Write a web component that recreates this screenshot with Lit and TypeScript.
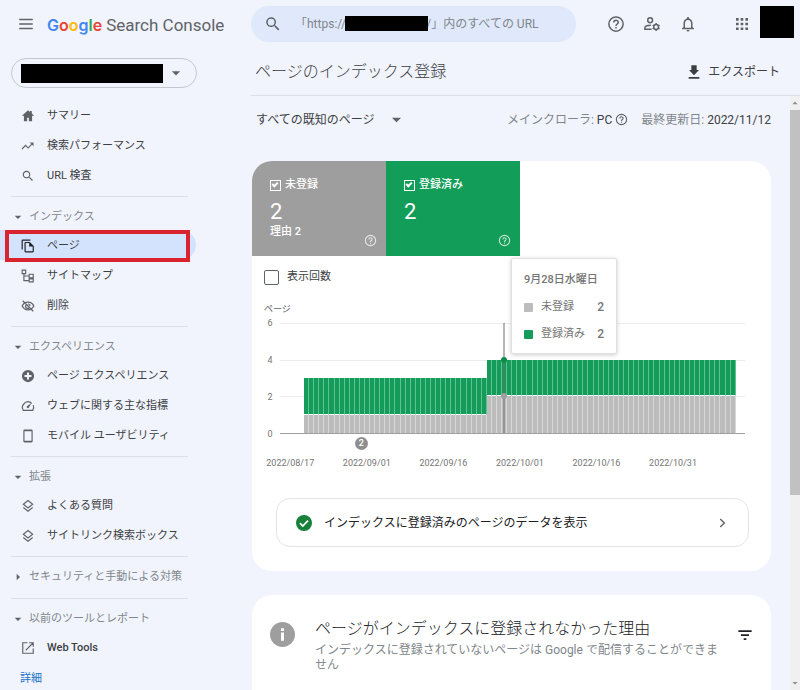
import { LitElement, html, css, svg, nothing } from "lit";
import { customElement, property } from "lit/decorators.js";

const icons: Record<string, unknown> = {
  menu: svg`<path d="M3 5h18v2H3zM3 11h18v2H3zM3 17h18v2H3z"/>`,
  home: svg`<path d="M12 2 1.500 11.500H5V21h5.500v-6h3v6H19v-9.500h3.500L18.500 7.900V3.500h-3v1.700z"/>`,
  trend: svg`<path d="m15 6 2.600 2.600-5.400 5.400-4.400-4.400L1 16.400l1.400 1.400 5.400-5.400 4.400 4.400 6.800-6.800L21.500 12.500V6z"/>`,
  search: svg`<path d="M15.500 14h-.8l-.3-.3A6.500 6.500 0 1 0 13.700 14.400l.3.300v.8l5 5 1.500-1.500zm-6 0a4.500 4.500 0 1 1 0-9 4.500 4.500 0 0 1 0 9z"/>`,
  pages: svg`<path d="M16 1H3a2 2 0 0 0-2 2v15h2V3h13z"/><path fill-rule="evenodd" d="M15 5H8a2 2 0 0 0-2 2v14c0 1.100.9 2 2 2h12a2 2 0 0 0 2-2V12zM8 21V7h6v6h6v8z"/>`,
  sitemap: svg`<path fill="none" stroke="currentColor" stroke-width="2" d="M2 2h6v6H2zM5 8v12h9M5 12h9M14 9h7v6h-7zM14 17h7v5h-7z"/>`,
  hidden: svg`<path fill="none" stroke="currentColor" stroke-width="2.200" d="M2 12c2-4 5.500-6.500 10-6.500S20 8 22 12c-2 4-5.500 6.500-10 6.500S4 16 2 12zM3 3l18 18"/><path fill="none" stroke="currentColor" stroke-width="2" d="M9 10a3.500 3.500 0 0 0 5 5M12 8.500a3.500 3.500 0 0 1 3.500 3.500"/>`,
  plus: svg`<path fill-rule="evenodd" d="M12 1.500a10.500 10.500 0 1 0 0 21 10.500 10.500 0 0 0 0-21zM10.300 6h3.400v4.300H18v3.400h-4.300V18h-3.400v-4.300H6v-3.400h4.300z"/>`,
  speed: svg`<path fill="none" stroke="currentColor" stroke-width="2" d="M18.500 7.500A9.500 9.500 0 0 0 4 19.500h16a9.500 9.500 0 0 0 .8-9"/><path d="m18 7-4.500 7.500a2 2 0 1 1-3-2.500z"/>`,
  phone: svg`<path fill-rule="evenodd" d="M6 1h12a2 2 0 0 1 2 2v18a2 2 0 0 1-2 2H6a2 2 0 0 1-2-2V3c0-1.100.9-2 2-2zm0 3v16h12V4z"/>`,
  layers: svg`<path fill="none" stroke="currentColor" stroke-width="2" d="m12 2.500 8 6.500-8 6.500L4 9zM4 14.500l8 6.500 8-6.500"/>`,
  open: svg`<path fill="none" stroke="currentColor" stroke-width="2" d="M11 3H3v18h18v-8M14 3h7v7M21 3 8 16"/>`,
  help: svg`<circle cx="12" cy="12" r="9.500" fill="none" stroke="currentColor" stroke-width="2"/><path fill="none" stroke="currentColor" stroke-width="2" d="M9 10c0-4 6-4 6-.3 0 2.300-3 2.400-3 5"/><path d="M11 16h2v2h-2z"/>`,
  users: svg`<path fill="none" stroke="currentColor" stroke-width="2" d="M11.500 19H2.500v-2c0-2.300 3.500-3.500 8-3.500"/><circle cx="9.500" cy="7" r="3.200" fill="none" stroke="currentColor" stroke-width="2"/><circle cx="17.500" cy="16" r="3.200" fill="none" stroke="currentColor" stroke-width="2"/><path fill="none" stroke="currentColor" stroke-width="2" d="M17.500 10.700v2M17.500 19.300v2M12.900 13.400l1.800 1M20.300 17.600l1.800 1M12.900 18.600l1.800-1M20.300 14.400l1.800-1"/>`,
  bell: svg`<path fill-rule="evenodd" d="M12 22a2 2 0 0 0 2-2h-4c0 1.100.9 2 2 2zm6-6v-5c0-3.100-1.600-5.600-4.500-6.300V4a1.500 1.500 0 0 0-3 0v.7C7.600 5.400 6 7.900 6 11v5l-2 2v1h16v-1zm-2 1H8v-6c0-2.500 1.500-4.500 4-4.500s4 2 4 4.500z"/>`,
  apps: svg`<path d="M4 4h3.500v3.500H4zM10.200 4h3.500v3.500h-3.500zM16.500 4H20v3.500h-3.500zM4 10.200h3.500v3.500H4zM10.200 10.200h3.500v3.500h-3.500zM16.500 10.200H20v3.500h-3.500zM4 16.500h3.500V20H4zM10.200 16.500h3.500V20h-3.500zM16.500 16.500H20V20h-3.500z"/>`,
  download: svg`<path d="M19.500 9H16V2H8v7H4.500l7.500 8zM4 19.500h16V22H4z"/>`,
  check: svg`<circle cx="12" cy="12" r="12"/><path fill="none" stroke="#fff" stroke-width="2.600" d="m6 12.300 4.200 4.200L18 8.500"/>`,
  chevron: svg`<path fill="none" stroke="currentColor" stroke-width="2.400" d="m9 5 7 7-7 7"/>`,
  info: svg`<circle cx="12" cy="12" r="12"/><path fill="#fff" d="M10.600 10h2.800v8h-2.800zM10.600 6h2.800v2.600h-2.800z"/>`,
  filter: svg`<path d="M2 5h20v2.400H2zM6 11h12v2.400H6zM10 17h4v2.400h-4z"/>`,
  down: svg`<path d="M2 8h20L12 18z"/>`,
  right: svg`<path d="M8 2v20l10-10z"/>`,
  up: svg`<path d="M2 17h20L12 6z"/>`,
};

@customElement("gsc-icon")
export class GscIcon extends LitElement {
  @property() name = "";
  static styles = css`
    :host { display: inline-block; flex: none; width: 14px; height: 14px; }
    .glyph { display: block; width: 100%; height: 100%; fill: currentColor; }
  `;
  render() {
    return html`<svg class="glyph" viewBox="0 0 24 24" aria-hidden="true">${icons[this.name]}</svg>`;
  }
}

interface Item { icon: string; text: string; current?: boolean; }
interface Group { title?: string; open?: boolean; items: Item[]; }

const groups: Group[] = [
  { items: [
    { icon: "home", text: "サマリー" },
    { icon: "trend", text: "検索パフォーマンス" },
    { icon: "search", text: "URL 検査" },
  ] },
  { title: "インデックス", open: true, items: [
    { icon: "pages", text: "ページ", current: true },
    { icon: "sitemap", text: "サイトマップ" },
    { icon: "hidden", text: "削除" },
  ] },
  { title: "エクスペリエンス", open: true, items: [
    { icon: "plus", text: "ページ エクスペリエンス" },
    { icon: "speed", text: "ウェブに関する主な指標" },
    { icon: "phone", text: "モバイル ユーザビリティ" },
  ] },
  { title: "拡張", open: true, items: [
    { icon: "layers", text: "よくある質問" },
    { icon: "layers", text: "サイトリンク検索ボックス" },
  ] },
  { title: "セキュリティと手動による対策", open: false, items: [] },
  { title: "以前のツールとレポート", open: true, items: [{ icon: "open", text: "Web Tools" }] },
];

@customElement("gsc-sidebar")
export class GscSidebar extends LitElement {
  static styles = css`
    :host { display: block; color: #3c4043; font-size: 11px; line-height: 16px; }
    .property {
      display: flex; align-items: center; gap: 8px; box-sizing: border-box;
      width: 186px; height: 30px; margin: 10px 0 12px 11px; padding: 0 15px 0 9px;
      border: 1px solid #c4c7d0; border-radius: 15px; background: none; color: #5f6368;
    }
    .mask { flex: 1; height: 19px; background: #000; }
    .property gsc-icon { width: 10px; height: 10px; }
    .list { margin: 0; padding: 0; list-style: none; }
    .row { position: relative; }
    .item {
      display: flex; align-items: center; gap: 12px; height: 30px; width: 196px;
      box-sizing: border-box; padding: 2px 0 0 21px; color: inherit; text-decoration: none; white-space: nowrap;
    }
    .item gsc-icon { color: #5f6368; }
    .item.current { background: #d3e3fd; border-radius: 0 15px 15px 0; }
    .item.current gsc-icon { color: #202124; }
    .frame { position: absolute; inset: 0 auto -2px 5px; width: 185px; box-sizing: border-box; border: 4px solid #d9232e; pointer-events: none; }
    .group { margin-top: 6px; }
    .group.closed { padding-bottom: 2px; }
    .rule { height: 1px; margin: 0 63px 4px 11px; background: #dcdfe6; }
    .toggle {
      display: flex; align-items: center; gap: 7px; height: 29px; padding: 2px 0 0 14px;
      border: 0; background: none; color: #80868b; font: inherit; white-space: nowrap;
    }
    .toggle gsc-icon { width: 8px; height: 8px; color: #5f6368; }
    .latin { font-weight: 500; }
    .more { display: inline-block; padding: 9px 20px; color: #1a73c8; text-decoration: none; }
  `;
  private item(i: Item) {
    return html`<li class="row">
      <a class="item ${i.current ? "current" : ""}" href="#" aria-current=${i.current ? "page" : nothing}>
        <gsc-icon name=${i.icon}></gsc-icon><span class=${i.icon === "open" ? "latin" : ""}>${i.text}</span></a>
      ${i.current ? html`<div class="frame"></div>` : nothing}
    </li>`;
  }
  render() {
    return html`
      <button class="property" aria-label="プロパティを選択"><span class="mask"></span><gsc-icon name="down"></gsc-icon></button>
      <nav>
        ${groups.map((g) => {
          const list = html`<ul class="list">${g.items.map((i) => this.item(i))}</ul>`;
          return g.title
            ? html`<section class="group ${g.open ? "" : "closed"}">
                <div class="rule"></div>
                <button class="toggle" aria-expanded=${g.open ? "true" : "false"}>
                  <gsc-icon name=${g.open ? "down" : "right"}></gsc-icon>${g.title}</button>
                ${list}
              </section>`
            : list;
        })}
        <a class="more" href="#">詳細</a>
      </nav>`;
  }
}

interface Day { off: number; on: number; }
const days: Day[] = Array.from({ length: 85 }, (_, i) => ({ off: i < 36 ? 1 : 2, on: 2 }));
const hovered = 39;
const noted = 11;
const maxValue = 6;
const dates = ["2022/08/17", "2022/09/01", "2022/09/16", "2022/10/01", "2022/10/16", "2022/10/31"];
const share = (v: number) => `height:${(v / maxValue) * 100}%`;

@customElement("gsc-chart")
export class GscChart extends LitElement {
  static styles = css`
    :host { display: block; color: #757575; font-size: 9px; line-height: 12px; }
    .name { margin: 0 0 8px 12px; color: #5f6368; }
    .body { display: flex; height: 111px; padding: 0 26px 0 12px; }
    .scale { display: flex; flex-direction: column; justify-content: space-between; width: 16px; margin: -6px 0; text-align: center; box-sizing: border-box; padding-right: 4px; }
    .plot { flex: 1; position: relative; display: flex; padding: 0 2% 0 5%; border-bottom: 1px solid #9e9e9e; }
    .grid { position: absolute; inset: 0; display: flex; flex-direction: column; }
    .line { flex: 1; border-top: 1px solid #ececec; }
    .day { flex: 1; position: relative; display: flex; flex-direction: column; justify-content: flex-end; }
    .on, .off { box-sizing: border-box; }
    .on { background: #159b5a; border-right: 1px solid #5cc391; border-bottom: 1px solid #fff; }
    .off { background: #bcbcbc; border-right: 1px solid #d8d8d8; }
    .cursor { position: absolute; top: 0; bottom: 0; left: 1px; width: 2px; background: rgba(110, 110, 110, 0.5); z-index: 1; }
    .dot { position: absolute; left: -1px; width: 6px; height: 6px; margin-bottom: -3px; border-radius: 50%; background: #0f8a4c; z-index: 1; }
    .dot.low { background: #9e9e9e; }
    .note {
      position: absolute; top: calc(100% + 4px); left: -5px; width: 13px; height: 13px; border-radius: 50%;
      background: #8f8f8f; color: #fff; font-weight: 500; line-height: 13px; text-align: center;
    }
    .tip {
      position: absolute; top: -65px; left: 9px; z-index: 2; box-sizing: border-box; width: 106px; padding: 13px 12px 11px;
      border: 1px solid #e0e0e0; border-radius: 2px; background: #fff; box-shadow: 0 1px 4px rgba(0, 0, 0, 0.2);
      font-size: 11px; line-height: 16px; color: #757575; white-space: nowrap;
    }
    .tip-title { margin-bottom: 10px; font-weight: 500; }
    .entry { display: flex; align-items: center; margin-top: 11px; }
    .swatch { width: 9px; height: 9px; margin-right: 8px; border-radius: 1px; background: #bcbcbc; }
    .swatch.green { background: #159b5a; }
    .value { margin-left: auto; font-size: 12px; font-weight: 500; }
    .dates { display: grid; grid-template-columns: repeat(6, 1fr); width: 88.5%; margin-top: 23px; text-align: center; }
  `;
  render() {
    return html`
      <div class="name">ページ</div>
      <div class="body">
        <div class="scale"><span>6</span><span>4</span><span>2</span><span>0</span></div>
        <div class="plot">
          <div class="grid"><div class="line"></div><div class="line"></div><div class="line"></div></div>
          ${days.map((d, i) => html`<div class="day">
            <div class="on" style=${share(d.on)}></div>
            <div class="off" style=${share(d.off)}></div>
            ${i === hovered ? html`
              <div class="cursor"></div>
              <div class="dot" style="bottom:${((d.on + d.off) / maxValue) * 100}%"></div>
              <div class="dot low" style="bottom:${(d.off / maxValue) * 100}%"></div>
              <div class="tip" role="tooltip">
                <div class="tip-title">9月28日水曜日</div>
                <div class="entry"><span class="swatch"></span>未登録<span class="value">2</span></div>
                <div class="entry"><span class="swatch green"></span>登録済み<span class="value">2</span></div>
              </div>` : nothing}
            ${i === noted ? html`<div class="note">2</div>` : nothing}
          </div>`)}
        </div>
      </div>
      <div class="dates">${dates.map((d) => html`<span>${d}</span>`)}</div>`;
  }
}

@customElement("app-root")
export class AppRoot extends LitElement {
  static styles = css`
    :host {
      display: flex; flex-direction: column; height: 100vh; overflow: hidden; background: #f1f4fc; color: #3c4043;
      font-family: Roboto, "Noto Sans CJK JP", sans-serif; font-size: 12px; line-height: 16px;
    }
    button { font: inherit; color: inherit; }
    .icon-btn { display: flex; padding: 0; border: 0; background: none; color: #5f6368; }
    .top { display: flex; align-items: center; height: 48px; flex: none; }
    .brand { display: flex; align-items: center; gap: 12px; box-sizing: border-box; width: 251px; padding-left: 17px; }
    .brand gsc-icon { width: 18px; height: 18px; }
    .logo { display: flex; align-items: baseline; gap: 4px; padding-top: 2px; color: #5f6368; font-size: 17px; line-height: 20px; white-space: nowrap; }
    .google { font-family: Inter, sans-serif; font-size: 16px; font-weight: 600; }
    .b { color: #4285f4; } .r { color: #ea4335; } .y { color: #fbbc04; } .g { color: #34a853; }
    .search {
      position: relative; display: flex; align-items: center; gap: 13px; box-sizing: border-box; flex: 1; max-width: 325px;
      height: 36px; padding-left: 13px; border-radius: 18px; background: #dfe9fb; color: #5f6368;
    }
    .search gsc-icon { width: 18px; height: 18px; }
    .query { flex: 1; min-width: 0; padding: 0; border: 0; outline: 0; background: none; font: inherit; color: #80868b; }
    .query::placeholder { color: #80868b; opacity: 1; }
    .redacted { position: absolute; left: 94px; top: 10px; width: 83px; height: 15px; background: #000; }
    .actions { display: flex; align-items: center; gap: 18px; margin-left: auto; padding-right: 6px; }
    .actions gsc-icon { width: 18px; height: 18px; }
    .apps { margin-left: 18px; }
    .avatar { width: 34px; height: 32px; margin: 0 0 4px -9px; padding: 0; border: 0; background: #000; }
    .actions .icon-btn { margin-bottom: 1px; }
    .columns { display: flex; flex: 1; min-height: 0; }
    gsc-sidebar { width: 251px; flex: none; }
    main { flex: 1; min-width: 0; display: flex; flex-direction: column; }
    .title-bar { display: flex; align-items: center; justify-content: space-between; height: 47px; flex: none; padding: 0 20px 0 4px; border-bottom: 1px solid #dcdfe6; }
    h1 { margin: 0; font-size: 16px; font-weight: 300; line-height: 24px; }
    .export { display: flex; align-items: center; gap: 6px; padding: 0; border: 0; background: none; }
    .export gsc-icon { width: 16px; height: 16px; }
    .viewport { display: flex; flex: 1; min-height: 0; }
    .content { flex: 1; min-width: 0; padding: 0 19px 0 1px; overflow: hidden; }
    .filters { display: flex; align-items: center; height: 47px; padding-left: 4px; margin-bottom: 18px; }
    .pick { display: flex; align-items: center; gap: 14px; }
    .pick select { appearance: none; padding: 0; border: 0; background: none; font: inherit; color: inherit; }
    .pick gsc-icon { width: 11px; height: 11px; color: #5f6368; }
    .meta { display: flex; align-items: center; gap: 13px; margin-left: auto; color: #80868b; white-space: nowrap; }
    .meta b { color: #3c4043; font-weight: 400; }
    .meta span { display: flex; align-items: center; gap: 3px; }
    .meta gsc-icon { width: 13px; height: 13px; color: #5f6368; }
    .card { border-radius: 20px; background: #fff; overflow: hidden; }
    .tiles { display: flex; height: 95px; }
    .tile { position: relative; box-sizing: border-box; width: 134px; padding: 16px 18px 0; background: #9e9e9e; color: #fff; }
    .tile.green { background: #129d58; }
    .tile label { display: flex; align-items: center; gap: 4px; font-size: 11px; font-weight: 500; }
    .tick { appearance: none; box-sizing: border-box; width: 11px; height: 11px; margin: 0; border: 1px solid #fff; position: relative; }
    .tick:checked::after { content: ""; position: absolute; left: 2px; top: 0; width: 2px; height: 4px; border: solid #fff; border-width: 0 2px 2px 0; transform: rotate(45deg); }
    .count { margin-top: 6px; font-size: 22px; line-height: 26px; }
    .reason { font-size: 11px; line-height: 14px; font-weight: 500; }
    .hint { position: absolute; right: 9px; bottom: 9px; color: #fff; opacity: 0.75; }
    .hint gsc-icon { width: 13px; height: 13px; }
    .toggle { display: flex; align-items: center; gap: 8px; padding: 13px 12px 18px; font-size: 11px; }
    .box { appearance: none; box-sizing: border-box; width: 15px; height: 15px; margin: 0; border: 1px solid #5f6368; border-radius: 2px; }
    .banner {
      display: flex; align-items: center; gap: 12px; box-sizing: border-box; width: calc(100% - 46px); height: 49px;
      margin: 29px 22px 24px 24px; padding: 0 19px; border: 1px solid #e3e3e3; border-radius: 14px; background: #fff; text-align: left; color: #5f6368;
    }
    .ok { width: 16px; height: 16px; color: #188038; }
    .banner-text { flex: 1; color: #202124; }
    .why { display: flex; align-items: flex-start; margin-top: 24px; padding: 22px 18px 40px; }
    .info { width: 25px; height: 25px; margin: 5px 20px 0 0; color: #9e9e9e; }
    .why-text { flex: 1; max-width: 410px; margin-right: auto; }
    h2 { margin: 0; color: #202124; font-size: 16px; font-weight: 300; line-height: 24px; }
    .why p { margin: 2px 0 0; color: #80868b; line-height: 15px; }
    .filter { margin-top: 10px; color: #202124; }
    .filter gsc-icon { width: 16px; height: 16px; }
    .bar { display: flex; flex-direction: column; align-items: center; width: 10px; flex: none; background: #f0f0f0; color: #8a8a8a; }
    .bar gsc-icon { width: 6px; height: 6px; margin: 4px 0; }
    .track { flex: 1; width: 100%; }
    .thumb { height: 68%; background: #c1c1c1; }
  `;
  render() {
    return html`
      <header class="top">
        <div class="brand">
          <button class="icon-btn" aria-label="メニュー"><gsc-icon name="menu"></gsc-icon></button>
          <div class="logo"><span class="google"><span class="b">G</span><span class="r">o</span><span class="y">o</span><span class="b">g</span><span class="g">l</span><span class="r">e</span></span><span>Search Console</span></div>
        </div>
        <div class="search">
          <gsc-icon name="search"></gsc-icon>
          <input class="query" type="text" aria-label="URL 検査" placeholder=${"「https://" + "\u00a0".repeat(27) + "/」内のすべての URL"}>
          <span class="redacted"></span>
        </div>
        <div class="actions">
          <button class="icon-btn" aria-label="ヘルプ"><gsc-icon name="help"></gsc-icon></button>
          <button class="icon-btn" aria-label="ユーザー設定"><gsc-icon name="users"></gsc-icon></button>
          <button class="icon-btn" aria-label="通知"><gsc-icon name="bell"></gsc-icon></button>
          <button class="icon-btn apps" aria-label="アプリ"><gsc-icon name="apps"></gsc-icon></button>
          <button class="avatar" aria-label="アカウント"></button>
        </div>
      </header>
      <div class="columns">
        <gsc-sidebar></gsc-sidebar>
        <main>
          <div class="title-bar">
            <h1>ページのインデックス登録</h1>
            <button class="export"><gsc-icon name="download"></gsc-icon>エクスポート</button>
          </div>
          <div class="viewport">
            <div class="content">
              <div class="filters">
                <label class="pick"><select aria-label="ページの範囲"><option>すべての既知のページ</option></select><gsc-icon name="down"></gsc-icon></label>
                <div class="meta">
                  <span>メインクローラ: <b>PC</b><gsc-icon name="help"></gsc-icon></span>
                  <span>最終更新日: <b>2022/11/12</b></span>
                </div>
              </div>
              <section class="card">
                <div class="tiles">
                  <div class="tile">
                    <label><input class="tick" type="checkbox" checked>未登録</label>
                    <div class="count">2</div>
                    <div class="reason">理由 2</div>
                    <button class="icon-btn hint" aria-label="ヘルプ"><gsc-icon name="help"></gsc-icon></button>
                  </div>
                  <div class="tile green">
                    <label><input class="tick" type="checkbox" checked>登録済み</label>
                    <div class="count">2</div>
                    <button class="icon-btn hint" aria-label="ヘルプ"><gsc-icon name="help"></gsc-icon></button>
                  </div>
                </div>
                <label class="toggle"><input class="box" type="checkbox">表示回数</label>
                <gsc-chart></gsc-chart>
                <button class="banner">
                  <gsc-icon class="ok" name="check"></gsc-icon>
                  <span class="banner-text">インデックスに登録済みのページのデータを表示</span>
                  <gsc-icon name="chevron"></gsc-icon>
                </button>
              </section>
              <section class="card why">
                <gsc-icon class="info" name="info"></gsc-icon>
                <div class="why-text">
                  <h2>ページがインデックスに登録されなかった理由</h2>
                  <p>インデックスに登録されていないページは Google で配信することができません</p>
                </div>
                <button class="icon-btn filter" aria-label="フィルタ"><gsc-icon name="filter"></gsc-icon></button>
              </section>
            </div>
            <div class="bar" aria-hidden="true">
              <gsc-icon name="up"></gsc-icon>
              <div class="track"><div class="thumb"></div></div>
              <gsc-icon name="down"></gsc-icon>
            </div>
          </div>
        </main>
      </div>`;
  }
}
